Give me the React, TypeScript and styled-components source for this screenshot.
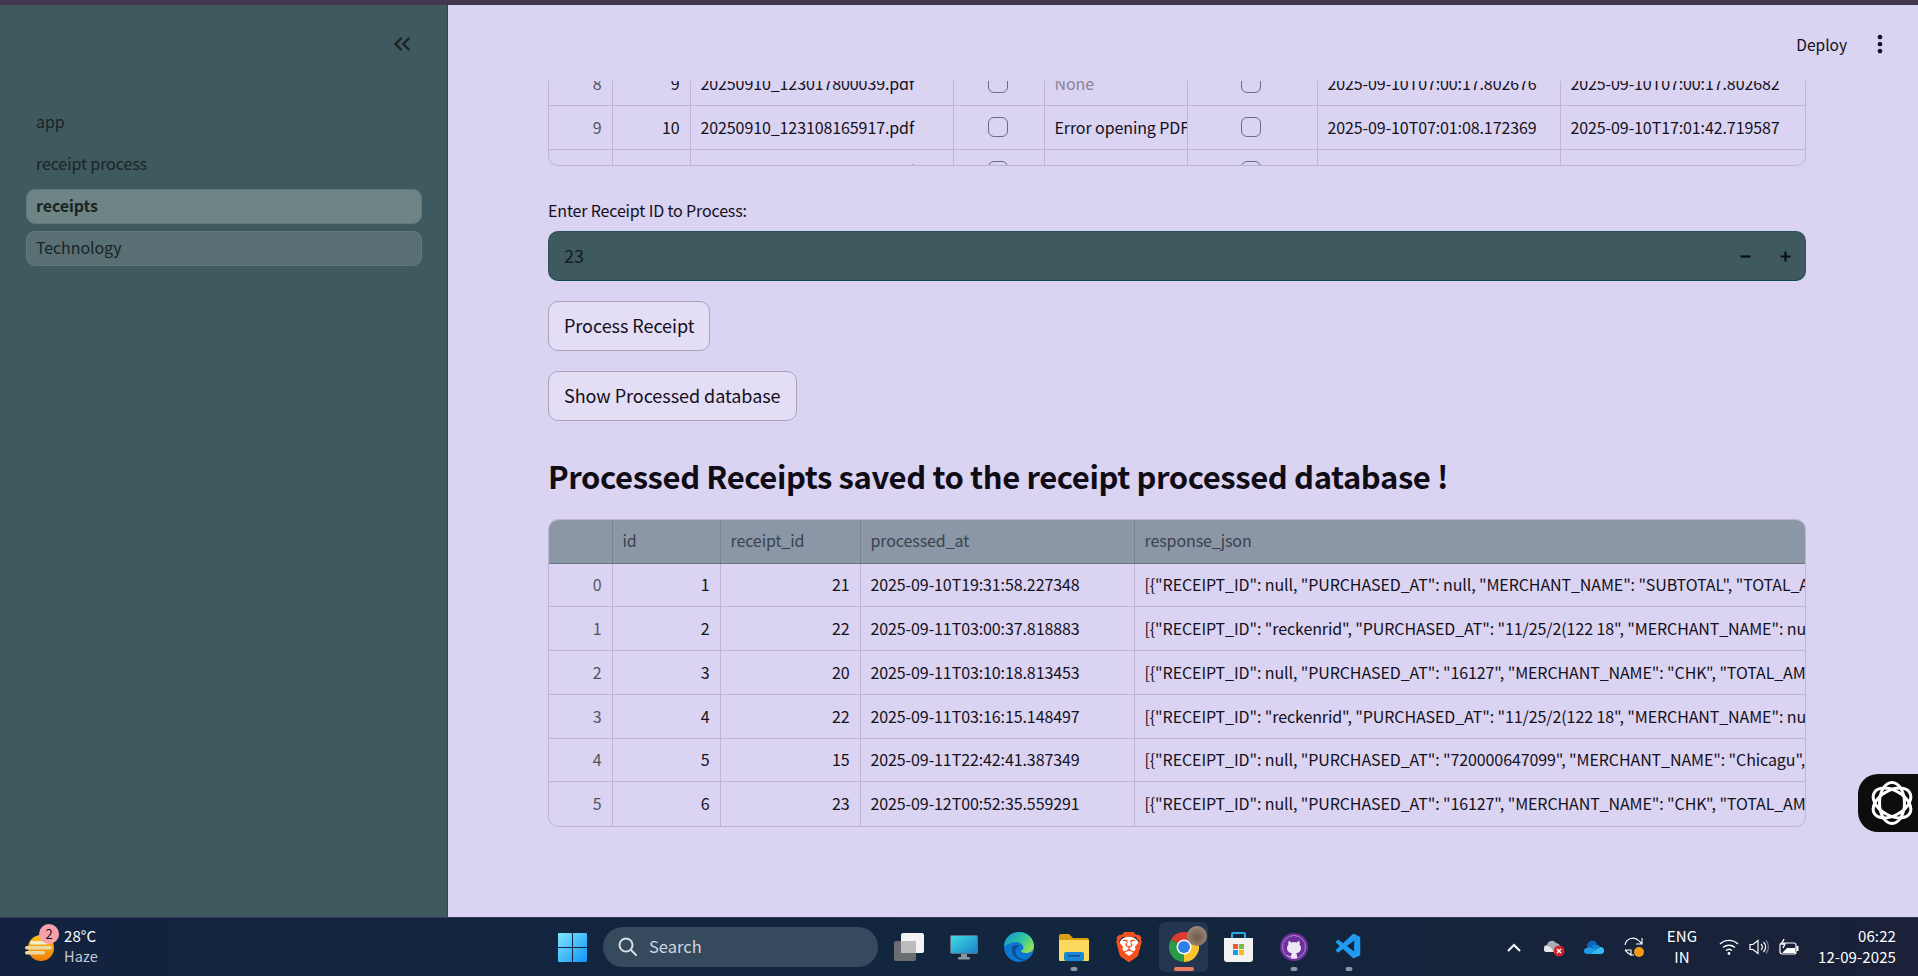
import styled, { createGlobalStyle } from "styled-components";
import { MdKeyboardDoubleArrowLeft, MdMoreVert } from "react-icons/md";
import { SiBrave } from "react-icons/si";
import { VscVscode } from "react-icons/vsc";

const FONT = '"Noto Sans CJK JP", "Noto Sans", sans-serif';

const GlobalStyle = createGlobalStyle`
  html, body { margin: 0; padding: 0; overflow: hidden; }
  body { font-family: ${FONT}; color: #14101c; }
  * { box-sizing: border-box; }
`;

const Page = styled.div`
  position: relative;
  width: 1918px;
  height: 976px;
  display: flex;
  flex-direction: column;
  background: #dad3f1;
`;

const TopStrip = styled.div`
  height: 5px;
  background: #423650;
  flex: none;
`;

const Body = styled.div`
  flex: 1;
  display: flex;
  min-height: 0;
`;

const Sidebar = styled.aside`
  width: 448px;
  flex: none;
  background: #3f5a5e;
  border-right: 1px solid #1f4a50;
`;

const CollapseRow = styled.div`
  height: 100px;
  padding: 25px 31px 0 0;
  display: flex;
  justify-content: flex-end;
  align-items: flex-start;
  color: #1c2526;
`;

const Nav = styled.nav`
  display: flex;
  flex-direction: column;
  gap: 7px;
  padding: 0 25px 0 26px;
`;

const NavItem = styled.div<{ $kind?: "active" | "muted" }>`
  height: 35px;
  border-radius: 9px;
  padding: 0 9px 3px;
  display: flex;
  align-items: center;
  font-size: 16px;
  letter-spacing: -0.1px;
  color: #1a2425;
  font-weight: ${(p) => (p.$kind === "active" ? 700 : 400)};
  background: ${(p) =>
    p.$kind === "active" ? "#6e8485" : p.$kind === "muted" ? "#587073" : "transparent"};
  border: 1px solid ${(p) => (p.$kind ? "#5f7a7c" : "transparent")};
`;

const Main = styled.main`
  flex: 1;
  min-width: 0;
  padding: 0 112px 0 100px;
`;

const AppHeader = styled.div`
  height: 76px;
  padding-top: 2px;
  margin-right: -88px;
  display: flex;
  justify-content: flex-end;
  align-items: center;
  gap: 19px;
  font-size: 15.5px;
`;

const TableFrame = styled.div`
  height: 85px;
  overflow: hidden;
  border: 1px solid #bdb5d2;
  border-top: none;
  border-radius: 0 0 10px 10px;
`;

const ScrolledBody = styled.div`
  margin-top: -19px;
`;

const ResultFrame = styled.div`
  overflow: hidden;
  border: 1px solid #bdb5d2;
  border-radius: 10px;
`;

const Table = styled.table`
  width: 100%;
  table-layout: fixed;
  border-collapse: collapse;
  font-size: 16px;
  letter-spacing: -0.1px;
`;

const Th = styled.th`
  height: 43px;
  padding: 0 10px 2px;
  text-align: left;
  font-weight: 400;
  background: #8b97a6;
  color: #3a424d;
  border-right: 1px solid #77838f;
  border-bottom: 1px solid #69747f;
  &:last-child { border-right: none; }
`;

const Td = styled.td<{ $align?: "right"; $tone?: "index" | "faint" }>`
  height: 43.75px;
  padding: 0 10px 1px;
  white-space: nowrap;
  overflow: hidden;
  text-align: ${(p) => p.$align || "left"};
  color: ${(p) => (p.$tone === "index" ? "#57525f" : p.$tone === "faint" ? "#8a8598" : "#14101c")};
  border-right: 1px solid #bdb5d2;
  border-bottom: 1px solid #bdb5d2;
  &:last-child { border-right: none; }
  tr:last-child & { border-bottom: none; }
`;

const CheckCell = styled(Td)`
  text-align: center;
  padding: 0 11px 0 9px;
`;

const CheckBox = styled.span`
  display: block;
  width: 20px;
  height: 20px;
  margin: 0 auto 2px;
  border: 1px solid #6f6a7c;
  border-radius: 6px;
`;

const FieldLabel = styled.label`
  display: block;
  margin: 34px 0 9px;
  height: 22px;
  line-height: 21px;
  font-size: 16px;
  letter-spacing: -0.15px;
`;

const NumberField = styled.div`
  height: 50px;
  display: flex;
  align-items: center;
  background: #3f5a5e;
  border: 1px solid #2b5257;
  border-bottom-color: #0f4a4e;
  border-radius: 10px;
  padding: 0 0 0 15px;
`;

const NumberValue = styled.input`
  flex: 1;
  min-width: 0;
  border: none;
  outline: none;
  padding: 0 0 3px;
  background: transparent;
  font: 400 18px ${FONT};
  color: #141c1d;
`;

const StepButton = styled.span`
  width: 40px;
  display: flex;
  justify-content: center;
  color: #0c1112;
`;

const ActionButton = styled.button`
  display: block;
  height: 50px;
  margin-top: 20px;
  padding: 0 15px 3px;
  background: #e3ddf5;
  border: 1px solid #a9a2ba;
  border-radius: 10px;
  font: 400 18px ${FONT};
  letter-spacing: -0.05px;
  color: #14101c;
`;

const Heading = styled.h2`
  margin: 36px 0 22px;
  height: 40px;
  line-height: 38px;
  font-size: 31px;
  letter-spacing: -0.4px;
  font-weight: 700;
  white-space: nowrap;
  color: #100c16;
`;

const FloatingBadge = styled.div`
  position: absolute;
  right: 0;
  top: 774px;
  width: 60px;
  height: 58px;
  padding-left: 12px;
  display: flex;
  align-items: center;
  background: #0d0d0d;
  border-radius: 20px 0 0 20px;
`;

const Taskbar = styled.footer`
  height: 59px;
  flex: none;
  display: flex;
  align-items: center;
  background: linear-gradient(90deg, #13233f 0%, #12263f 55%, #1a2138 100%);
  border-top: 1px solid #333a55;
  color: #fff;
`;

const Weather = styled.div`
  width: 558px;
  flex: none;
  padding-left: 25px;
  display: flex;
  align-items: center;
  gap: 10px;
`;

const WeatherIcon = styled.div`
  position: relative;
  width: 29px;
  height: 28px;
`;

const AlertDot = styled.span`
  position: absolute;
  left: 14px;
  top: -9px;
  width: 20px;
  height: 20px;
  border-radius: 50%;
  background: #f7a1ad;
  color: #111;
  font-size: 13px;
  line-height: 20px;
  text-align: center;
`;

const StackText = styled.div`
  display: flex;
  flex-direction: column;
  padding-bottom: 3px;
  font-size: 15px;
  letter-spacing: 0.1px;
  line-height: 21px;
`;

const Faded = styled.span`
  color: #c3cad6;
  font-size: 14.5px;
  line-height: 20px;
`;

const SearchBox = styled.div`
  width: 275px;
  height: 40px;
  margin: 0 3px 0 16px;
  padding: 0 0 2px 15px;
  display: flex;
  align-items: center;
  gap: 12px;
  border-radius: 20px;
  background: #364a5e;
  color: #d0d6de;
  font-size: 16.5px;
`;

const AppSlot = styled.div<{ $open?: boolean; $running?: boolean }>`
  position: relative;
  width: 55px;
  height: 50px;
  flex: none;
  display: flex;
  align-items: center;
  justify-content: center;
  &::before {
    content: "";
    position: absolute;
    inset: 0 3px;
    border-radius: 6px;
    background: ${(p) => (p.$open ? "#243550" : "transparent")};
  }
  &::after {
    content: "";
    display: ${(p) => (p.$open || p.$running ? "block" : "none")};
    position: absolute;
    bottom: 1px;
    left: 50%;
    transform: translateX(-50%);
    width: ${(p) => (p.$open ? "20px" : "7px")};
    height: 4px;
    border-radius: 2px;
    background: ${(p) => (p.$open ? "#ee7b62" : "#8e96a3")};
  }
  > * { position: relative; }
`;

const Avatar = styled.span`
  position: absolute;
  left: 31px;
  top: 4px;
  width: 20px;
  height: 20px;
  border-radius: 50%;
  background: radial-gradient(circle at 50% 55%, #6b5a4b 0%, #8d7b6b 55%, #b3a79b 100%);
`;

const BraveMark = styled.span`
  display: flex;
  width: 30px;
  height: 30px;
  align-items: center;
  justify-content: center;
  color: #f4511e;
  background: radial-gradient(circle, #fff 0 10px, transparent 11px);
`;

const Tray = styled.div`
  flex: 1;
  display: flex;
  align-items: center;
  padding: 0 22px 0 0;
  margin-left: 118px;
`;

const TrayItem = styled.div<{ $w: number }>`
  width: ${(p) => p.$w}px;
  flex: none;
  display: flex;
  justify-content: center;
  text-align: center;
`;

const Clock = styled(StackText)`
  margin-left: auto;
  text-align: right;
`;

const StartIcon = () => (
  <svg width="29" height="29" viewBox="0 0 29 29">
    <defs>
      <linearGradient id="win" x1="0" y1="0" x2="1" y2="1">
        <stop offset="0" stopColor="#7fe6ff" />
        <stop offset="1" stopColor="#0f94f5" />
      </linearGradient>
    </defs>
    <path fill="url(#win)" d="M0 1a1 1 0 0 1 1-1h13v14H0zM15 0h13a1 1 0 0 1 1 1v13H15zM0 15h14v14H1a1 1 0 0 1-1-1zM15 15h14v13a1 1 0 0 1-1 1H15z" />
  </svg>
);

const SearchIcon = () => (
  <svg width="19" height="19" viewBox="0 0 19 19" fill="none" stroke="#d8dde4" strokeWidth="2">
    <circle cx="8" cy="8" r="6.5" />
    <path d="M13 13l5 5" strokeLinecap="round" />
  </svg>
);

const TaskViewIcon = () => (
  <svg width="30" height="28" viewBox="0 0 30 28">
    <rect x="0" y="8" width="22" height="20" rx="2" fill="#6a6d72" />
    <rect x="7" y="0" width="23" height="20" rx="2" fill="#f4f4f4" />
    <rect x="7" y="8" width="15" height="12" fill="#bcbcbc" />
  </svg>
);

const MonitorIcon = () => (
  <svg width="28" height="25" viewBox="0 0 28 25">
    <defs>
      <linearGradient id="mon" x1="0" y1="0" x2="1" y2="1">
        <stop offset="0" stopColor="#3fe0e6" />
        <stop offset="1" stopColor="#1b7fc4" />
      </linearGradient>
    </defs>
    <rect x="0.5" y="0.5" width="27" height="18" rx="1" fill="url(#mon)" stroke="#5d7080" />
    <rect x="11" y="19" width="6" height="3" fill="#8b96a0" />
    <rect x="8" y="22" width="12" height="2.5" rx="1" fill="#8b96a0" />
  </svg>
);

const EdgeIcon = () => (
  <svg width="30" height="30" viewBox="0 0 30 30">
    <defs>
      <linearGradient id="edgeTop" x1="0" y1="0" x2="1" y2="0.6">
        <stop offset="0" stopColor="#0f8fd8" />
        <stop offset="0.6" stopColor="#2fc6a0" />
        <stop offset="1" stopColor="#8ee05a" />
      </linearGradient>
    </defs>
    <circle cx="15" cy="15" r="15" fill="#0c77cf" />
    <path d="M0 15C0 6 7 0 15 0c9 0 15 7 15 14 0 5-4 7-8 7-3 0-5-1-5-2 2-1 3-3 2-5-2-4-8-5-12-3-4 1-7 3-7 4z" fill="url(#edgeTop)" />
    <path d="M10 13c-3 2-3 7 0 11 3 4 9 6 14 3 -4 1-9 0-11-3-2-3-2-7 1-9 2-1 3-2-4-2z" fill="#0b4f98" />
  </svg>
);

const FolderIcon = () => (
  <svg width="30" height="27" viewBox="0 0 30 27">
    <path d="M0 2a2 2 0 0 1 2-2h8l4 4h14a2 2 0 0 1 2 2v4H0z" fill="#d9a015" />
    <path d="M0 6h30v20a1 1 0 0 1-1 1H1a1 1 0 0 1-1-1z" fill="#fcd95c" />
    <rect x="5" y="18" width="20" height="9" rx="2" fill="#1a86d8" />
    <rect x="9" y="21" width="12" height="1.5" fill="#0c4f90" />
  </svg>
);

const ChromeIcon = () => (
  <svg width="30" height="30" viewBox="0 0 30 30">
    <path d="M2 7.5A15 15 0 0 1 28 7.5L15 15z" fill="#dd3b2f" />
    <path d="M28 7.5A15 15 0 0 1 15 30L15 15z" fill="#f8c62a" />
    <path d="M15 30A15 15 0 0 1 2 7.5L15 15z" fill="#2b9a48" />
    <circle cx="15" cy="15" r="7.5" fill="#fff" />
    <circle cx="15" cy="15" r="6" fill="#2f7fe6" />
  </svg>
);

const StoreIcon = () => (
  <svg width="29" height="30" viewBox="0 0 29 30">
    <path d="M8 6V2a1 1 0 0 1 1-1h11a1 1 0 0 1 1 1v4" fill="none" stroke="#29a9e8" strokeWidth="2" />
    <path d="M0 6h29v21a3 3 0 0 1-3 3H3a3 3 0 0 1-3-3z" fill="#f2f2f2" />
    <rect x="9" y="12" width="5" height="5" fill="#ee5a30" />
    <rect x="15" y="12" width="5" height="5" fill="#7cb93a" />
    <rect x="9" y="18" width="5" height="5" fill="#10a0ec" />
    <rect x="15" y="18" width="5" height="5" fill="#fbb810" />
  </svg>
);

const GithubIcon = () => (
  <svg width="28" height="28" viewBox="0 0 28 28">
    <circle cx="14" cy="14" r="14" fill="#6e2f9e" />
    <circle cx="14" cy="14" r="11.5" fill="none" stroke="#a98cc4" strokeWidth="1" />
    <path
      fill="#efe6f5"
      d="M9 7.5l2 2a10 10 0 0 1 6 0l2-2q1 2 .5 4q1.5 1.5 1.5 3.5c0 3.5-2.5 5-5 5.2q1 1 1 2.3v3h-6v-2c-2.5.5-3.5-.5-4.5-2q1.5.5 2.5 1.5h2q0-1.5 1-2.8c-2.5-.2-5-1.7-5-5.2q0-2 1.5-3.5q-.5-2 .5-4z"
    />
  </svg>
);

const SunIcon = () => (
  <svg width="29" height="28" viewBox="0 0 29 28">
    <defs>
      <linearGradient id="sun" x1="0" y1="0" x2="0" y2="1">
        <stop offset="0" stopColor="#fcc51a" />
        <stop offset="1" stopColor="#ef7d0a" />
      </linearGradient>
    </defs>
    <circle cx="16" cy="15" r="13" fill="url(#sun)" />
    <rect x="5" y="8" width="18" height="3.5" rx="1.7" fill="#f5ecc8" />
    <rect x="0" y="13" width="27" height="3.5" rx="1.7" fill="#ecd9a0" />
    <rect x="0" y="18" width="20" height="3.5" rx="1.7" fill="#ecd9a0" />
  </svg>
);

const RingLogo = () => (
  <svg width="44" height="46" viewBox="0 0 44 46" fill="none" stroke="#fff" strokeWidth="3">
    <ellipse cx="22" cy="23" rx="20.5" ry="12.5" transform="rotate(30 22 23)" />
    <ellipse cx="22" cy="23" rx="20.5" ry="12.5" transform="rotate(90 22 23)" />
    <ellipse cx="22" cy="23" rx="20.5" ry="12.5" transform="rotate(150 22 23)" />
  </svg>
);

const MinusGlyph = () => (
  <svg width="11" height="11" viewBox="0 0 11 11" fill="none" stroke="currentColor" strokeWidth="2.2">
    <path d="M0.5 5.5h10" />
  </svg>
);

const PlusGlyph = () => (
  <svg width="11" height="11" viewBox="0 0 11 11" fill="none" stroke="currentColor" strokeWidth="2.2">
    <path d="M0.5 5.5h10M5.5 0.5v10" />
  </svg>
);

const TrayChevron = () => (
  <svg width="14" height="9" viewBox="0 0 14 9" fill="none" stroke="#fff" strokeWidth="2">
    <path d="M1 8l6-6 6 6" />
  </svg>
);

const CloudError = () => (
  <svg width="21" height="20" viewBox="0 0 21 20">
    <path d="M3 15a3 3 0 0 1 0-7 5 5 0 0 1 9-2 4 4 0 0 1 4 5v4z" fill="#a9aeb5" />
    <path d="M3 15a3 3 0 0 1 0-6c3 0 5 3 7 6z" fill="#e8e8e8" />
    <circle cx="15" cy="14" r="5.5" fill="#d3232f" />
    <path d="M13 12l4 4M17 12l-4 4" stroke="#fff" strokeWidth="1.4" />
  </svg>
);

const OneDriveIcon = () => (
  <svg width="20" height="14" viewBox="0 0 20 14">
    <path d="M4 9a5 5 0 0 1 9-6l-3 4z" fill="#0a64c0" />
    <path d="M8 6a5 5 0 0 1 8 1l-6 5z" fill="#1385d8" />
    <path d="M3 14a3 3 0 0 1 0-6c3-2 5 0 7 1l5 5z" fill="#1a9ce8" />
    <path d="M7 14l9-7a3.5 3.5 0 0 1 1 7z" fill="#35bbf0" />
  </svg>
);

const SyncIcon = () => (
  <svg width="20" height="20" viewBox="0 0 20 20" fill="none" stroke="#fff" strokeWidth="1.1">
    <path d="M1 8a8 8 0 0 1 14-4l3 3M18 1v6h-6" />
    <path d="M1 13h6v6M1 13l3 3a8 8 0 0 0 6 2" />
    <circle cx="15" cy="15" r="5" fill="#f59a14" stroke="none" />
  </svg>
);

const WifiIcon = () => (
  <svg width="20" height="16" viewBox="0 0 20 16" fill="none" stroke="#fff" strokeWidth="1.4">
    <path d="M1 5a13 13 0 0 1 18 0M4 8.5a9 9 0 0 1 12 0M7 11.5a4.5 4.5 0 0 1 6 0" />
    <circle cx="10" cy="14.5" r="1.4" fill="#fff" stroke="none" />
  </svg>
);

const VolumeIcon = () => (
  <svg width="20" height="16" viewBox="0 0 20 16" fill="none" stroke="#fff" strokeWidth="1.2">
    <path d="M1 5.5h3l5-4v13l-5-4H1z" />
    <path d="M12 5a4 4 0 0 1 0 6M14.5 3a7 7 0 0 1 0 10" />
    <path d="M17 1.5a10 10 0 0 1 0 13" stroke="#777d88" />
  </svg>
);

const BatteryIcon = () => (
  <svg width="20" height="17" viewBox="0 0 20 17" fill="none" stroke="#fff" strokeWidth="1.2">
    <rect x="1" y="4" width="16" height="11" rx="2" />
    <rect x="17.5" y="7" width="2" height="5" fill="#fff" stroke="none" />
    <path d="M2 15L8 9h8v5H3z" fill="#fff" stroke="none" />
    <path d="M5 0L2.5 5H6L4 9" strokeWidth="1.4" />
  </svg>
);

const uploadCols = [63, 78, 263, 91, 143, 130, 243, 245];
const resultCols = [63, 108, 140, 274, 671];

const uploadRows = [
  ["8", "9", "20250910_123017800039.pdf", "None", "2025-09-10T07:00:17.802676", "2025-09-10T07:00:17.802682"],
  ["9", "10", "20250910_123108165917.pdf", "Error opening PDF", "2025-09-10T07:01:08.172369", "2025-09-10T17:01:42.719587"],
  ["10", "11", "20250910_123127118022.pdf", "None", "2025-09-10T07:01:27.120114", "2025-09-10T07:01:27.120120"],
];

const resultRows = [
  ["0", "1", "21", "2025-09-10T19:31:58.227348", '[{"RECEIPT_ID": null, "PURCHASED_AT": null, "MERCHANT_NAME": "SUBTOTAL", "TOTAL_AMOUNT": null}]'],
  ["1", "2", "22", "2025-09-11T03:00:37.818883", '[{"RECEIPT_ID": "reckenrid", "PURCHASED_AT": "11/25/2(122 18", "MERCHANT_NAME": null, "TOTAL_AMOUNT": null}]'],
  ["2", "3", "20", "2025-09-11T03:10:18.813453", '[{"RECEIPT_ID": null, "PURCHASED_AT": "16127", "MERCHANT_NAME": "CHK", "TOTAL_AMOUNT": null}]'],
  ["3", "4", "22", "2025-09-11T03:16:15.148497", '[{"RECEIPT_ID": "reckenrid", "PURCHASED_AT": "11/25/2(122 18", "MERCHANT_NAME": null, "TOTAL_AMOUNT": null}]'],
  ["4", "5", "15", "2025-09-11T22:42:41.387349", '[{"RECEIPT_ID": null, "PURCHASED_AT": "720000647099", "MERCHANT_NAME": "Chicagu", "TOTAL_AMOUNT": null}]'],
  ["5", "6", "23", "2025-09-12T00:52:35.559291", '[{"RECEIPT_ID": null, "PURCHASED_AT": "16127", "MERCHANT_NAME": "CHK", "TOTAL_AMOUNT": null}]'],
];

const Cols = ({ widths }: { widths: number[] }) => (
  <colgroup>
    {widths.map((w, i) => (
      <col key={i} width={w} />
    ))}
  </colgroup>
);

export default function App() {
  return (
    <Page>
      <GlobalStyle />
      <TopStrip />
      <Body>
        <Sidebar>
          <CollapseRow>
            <MdKeyboardDoubleArrowLeft size={28} />
          </CollapseRow>
          <Nav>
            <NavItem>app</NavItem>
            <NavItem>receipt process</NavItem>
            <NavItem $kind="active">receipts</NavItem>
            <NavItem $kind="muted">Technology</NavItem>
          </Nav>
        </Sidebar>
        <Main>
          <AppHeader>
            <span>Deploy</span>
            <MdMoreVert size={28} />
          </AppHeader>
          <TableFrame>
            <ScrolledBody>
              <Table>
                <Cols widths={uploadCols} />
                <tbody>
                  {uploadRows.map((r) => (
                    <tr key={r[0]}>
                      <Td $align="right" $tone="index">{r[0]}</Td>
                      <Td $align="right">{r[1]}</Td>
                      <Td>{r[2]}</Td>
                      <CheckCell><CheckBox /></CheckCell>
                      <Td $tone={r[3] === "None" ? "faint" : undefined}>{r[3]}</Td>
                      <CheckCell><CheckBox /></CheckCell>
                      <Td>{r[4]}</Td>
                      <Td>{r[5]}</Td>
                    </tr>
                  ))}
                </tbody>
              </Table>
            </ScrolledBody>
          </TableFrame>

          <FieldLabel>Enter Receipt ID to Process:</FieldLabel>
          <NumberField>
            <NumberValue defaultValue="23" />
            <StepButton><MinusGlyph /></StepButton>
            <StepButton><PlusGlyph /></StepButton>
          </NumberField>

          <ActionButton>Process Receipt</ActionButton>
          <ActionButton>Show Processed database</ActionButton>

          <Heading>Processed Receipts saved to the receipt processed database !</Heading>

          <ResultFrame>
            <Table>
              <Cols widths={resultCols} />
              <thead>
                <tr>
                  <Th />
                  <Th>id</Th>
                  <Th>receipt_id</Th>
                  <Th>processed_at</Th>
                  <Th>response_json</Th>
                </tr>
              </thead>
              <tbody>
                {resultRows.map((r) => (
                  <tr key={r[0]}>
                    <Td $align="right" $tone="index">{r[0]}</Td>
                    <Td $align="right">{r[1]}</Td>
                    <Td $align="right">{r[2]}</Td>
                    <Td>{r[3]}</Td>
                    <Td>{r[4]}</Td>
                  </tr>
                ))}
              </tbody>
            </Table>
          </ResultFrame>
        </Main>
      </Body>

      <FloatingBadge>
        <RingLogo />
      </FloatingBadge>

      <Taskbar>
        <Weather>
          <WeatherIcon>
            <SunIcon />
            <AlertDot>2</AlertDot>
          </WeatherIcon>
          <StackText>
            <span>28°C</span>
            <Faded>Haze</Faded>
          </StackText>
        </Weather>
        <StartIcon />
        <SearchBox>
          <SearchIcon />
          Search
        </SearchBox>
        <AppSlot><TaskViewIcon /></AppSlot>
        <AppSlot><MonitorIcon /></AppSlot>
        <AppSlot><EdgeIcon /></AppSlot>
        <AppSlot $running><FolderIcon /></AppSlot>
        <AppSlot>
          <BraveMark><SiBrave size={30} /></BraveMark>
        </AppSlot>
        <AppSlot $open>
          <ChromeIcon />
          <Avatar />
        </AppSlot>
        <AppSlot><StoreIcon /></AppSlot>
        <AppSlot $running><GithubIcon /></AppSlot>
        <AppSlot $running><VscVscode size={30} color="#1f9cf0" /></AppSlot>
        <Tray>
          <TrayItem $w={40}><TrayChevron /></TrayItem>
          <TrayItem $w={40}><CloudError /></TrayItem>
          <TrayItem $w={40}><OneDriveIcon /></TrayItem>
          <TrayItem $w={40}><SyncIcon /></TrayItem>
          <TrayItem $w={56}><StackText><span>ENG</span><span>IN</span></StackText></TrayItem>
          <TrayItem $w={38}><WifiIcon /></TrayItem>
          <TrayItem $w={22}><VolumeIcon /></TrayItem>
          <TrayItem $w={38}><BatteryIcon /></TrayItem>
          <Clock>
            <span>06:22</span>
            <span>12-09-2025</span>
          </Clock>
        </Tray>
      </Taskbar>
    </Page>
  );
}
